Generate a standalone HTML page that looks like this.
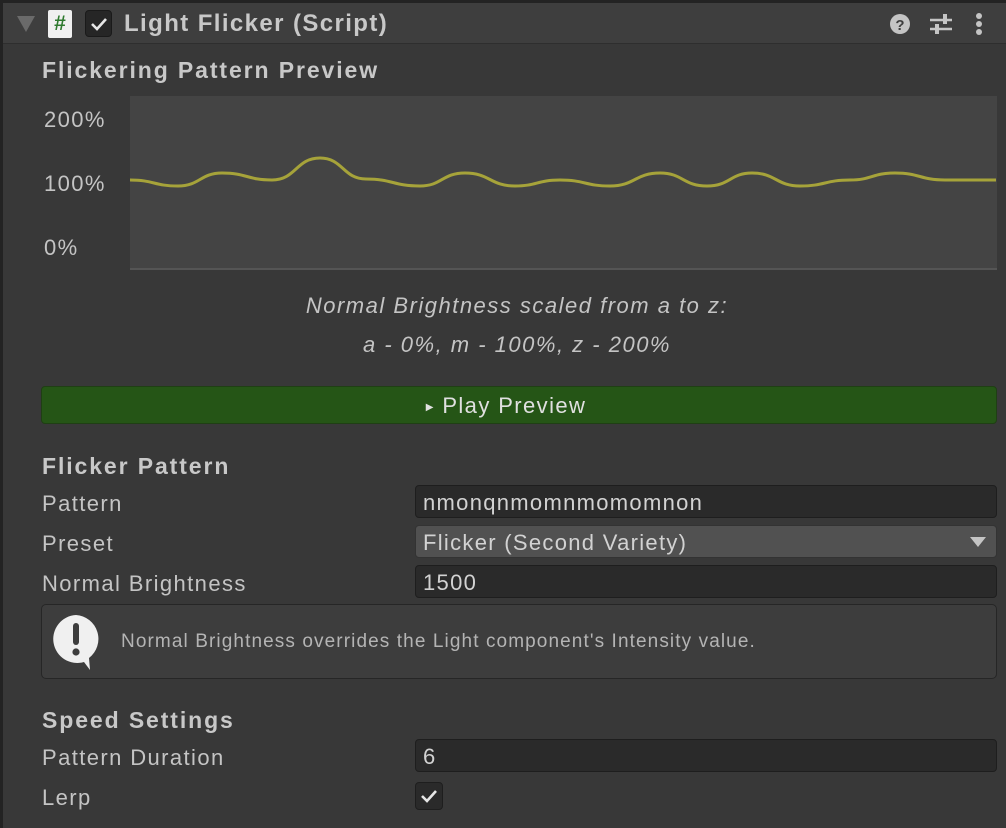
<!DOCTYPE html>
<html><head><meta charset="utf-8"><style>
*{margin:0;padding:0;box-sizing:border-box}
body{width:1006px;height:828px;background:#383838;position:relative;overflow:hidden;font-family:"Liberation Sans",sans-serif;color:#c4c4c4}
.a{position:absolute;white-space:nowrap}
.lbl{font-size:22px;letter-spacing:1.4px;color:#c4c4c4;left:42px}
.hd{font-size:23px;letter-spacing:1.9px;font-weight:bold;color:#c8c8c8;left:42px}
.fld{position:absolute;left:415px;width:582px;height:33px;background:#2a2a2a;border:1px solid #1e1e1e;border-radius:4px;font-size:22px;letter-spacing:1.3px;color:#d2d2d2;padding:4px 0 0 7px}
</style></head><body>
<div class="a" style="left:0;top:0;width:1006px;height:3px;background:#232323"></div>
<div class="a" style="left:0;top:0;width:3px;height:828px;background:#232323"></div>
<div class="a" style="left:3px;top:3px;width:1003px;height:41px;background:#3e3e3e;border-bottom:1px solid #2e2e2e"></div>
<svg class="a" style="left:16px;top:15px" width="20" height="18"><polygon points="1,1 19,1 10,17" fill="#6a6a6a"/></svg>
<div class="a" style="left:48px;top:10px;width:24px;height:28px;background:#f0f0f0;border-radius:2px;color:#2f7a2f;font-weight:bold;font-size:21px;text-align:center;line-height:28px">#</div>
<div class="a" style="left:85px;top:10px;width:27px;height:27px;background:#262626;border:1px solid #1a1a1a;border-radius:4px"></div>
<svg class="a" style="left:89px;top:15px" width="20" height="18"><path d="M3 9 L8 14 L17 4" stroke="#e6e6e6" stroke-width="2.6" fill="none"/></svg>
<div class="a" style="left:124px;top:10px;font-size:24px;letter-spacing:1.4px;font-weight:bold;color:#c8c8c8">Light Flicker (Script)</div>
<svg class="a" style="left:888px;top:12px" width="24" height="24"><circle cx="12" cy="12" r="10" fill="#c4c4c4"/><text x="12" y="18" text-anchor="middle" font-size="15" font-weight="bold" fill="#3e3e3e" font-family="Liberation Sans">?</text></svg>
<svg class="a" style="left:928px;top:12px" width="26" height="24"><path d="M2 8H24M2 17H24" stroke="#c4c4c4" stroke-width="2.5"/><rect x="15" y="2" width="4" height="10" fill="#c4c4c4"/><rect x="7" y="12" width="4" height="10" fill="#c4c4c4"/></svg>
<svg class="a" style="left:972px;top:12px" width="14" height="24"><circle cx="7" cy="4" r="3" fill="#c4c4c4"/><circle cx="7" cy="12" r="3" fill="#c4c4c4"/><circle cx="7" cy="20" r="3" fill="#c4c4c4"/></svg>

<div class="a hd" style="top:57px">Flickering Pattern Preview</div>
<div class="a lbl" style="left:44px;top:107px">200%</div>
<div class="a lbl" style="left:44px;top:171px">100%</div>
<div class="a lbl" style="left:44px;top:235px">0%</div>
<div class="a" style="left:130px;top:96px;width:867px;height:174px;background:#444;border-bottom:2px solid #555"></div>
<svg class="a" style="left:0;top:0" width="1006" height="300"><path d="M130 180 C154 180 154 186 178 186 C200 186 200 173 222 173 C247 173 247 180 272 180 C296 180 296 158 320 158 C343 158 343 179 366 179 C393 179 393 186 420 186 C442 186 442 173 465 173 C490 173 490 186 515 186 C537 186 537 180 560 180 C585 180 585 186 610 186 C635 186 635 173 660 173 C683 173 683 186 707 186 C730 186 730 173 752 173 C776 173 776 186 800 186 C825 186 825 180 850 180 C872 180 872 173 895 173 C920 173 920 180 945 180 L996 180" stroke="#a6a33a" stroke-width="3" fill="none"/></svg>
<div class="a" style="left:0;width:1034px;text-align:center;top:293px;font-size:22px;letter-spacing:1.5px;font-style:italic;color:#c4c4c4">Normal Brightness scaled from a to z:</div>
<div class="a" style="left:0;width:1034px;text-align:center;top:332px;font-size:22px;letter-spacing:1.5px;font-style:italic;color:#c4c4c4">a - 0%, m - 100%, z - 200%</div>
<div class="a" style="left:41px;top:386px;width:956px;height:38px;background:#255516;border:1px solid #1f3f14;border-radius:4px;text-align:center;font-size:22px;letter-spacing:1.4px;color:#e0e0e0;line-height:38px;padding-right:26px"><span style="font-size:10px;vertical-align:3px">&#9654;</span>&nbsp;Play Preview</div>

<div class="a hd" style="top:453px">Flicker Pattern</div>
<div class="a lbl" style="top:491px">Pattern</div>
<div class="fld" style="top:485px">nmonqnmomnmomomnon</div>
<div class="a lbl" style="top:531px">Preset</div>
<div class="fld" style="top:525px;background:#515151;border-color:#333">Flicker (Second Variety)</div>
<svg class="a" style="left:969px;top:536px" width="18" height="12"><polygon points="1,1 17,1 9,11" fill="#c4c4c4"/></svg>
<div class="a lbl" style="top:571px">Normal Brightness</div>
<div class="fld" style="top:565px">1500</div>
<div class="a" style="left:41px;top:604px;width:956px;height:75px;background:#3d3d3d;border:1px solid #262626;border-radius:5px"></div>
<svg class="a" style="left:50px;top:612px" width="56" height="60"><path d="M26 3 A24 24 0 1 0 34 50 L40 58 L39 46 A24 24 0 0 0 26 3Z" fill="#f0f0f0"/><rect x="23" y="11" width="6" height="22" rx="3" fill="#3d3d3d"/><circle cx="26" cy="40" r="3.6" fill="#3d3d3d"/></svg>
<div class="a" style="left:121px;top:631px;font-size:19px;letter-spacing:1.1px;color:#b4b4b4">Normal Brightness overrides the Light component's Intensity value.</div>

<div class="a hd" style="top:707px">Speed Settings</div>
<div class="a lbl" style="top:745px">Pattern Duration</div>
<div class="fld" style="top:739px">6</div>
<div class="a lbl" style="top:785px">Lerp</div>
<div class="a" style="left:415px;top:782px;width:28px;height:28px;background:#2a2a2a;border:1px solid #1e1e1e;border-radius:4px"></div>
<svg class="a" style="left:419px;top:786px" width="20" height="20"><path d="M3 10 L8 15 L17 5" stroke="#e6e6e6" stroke-width="2.6" fill="none"/></svg>
</body></html>
